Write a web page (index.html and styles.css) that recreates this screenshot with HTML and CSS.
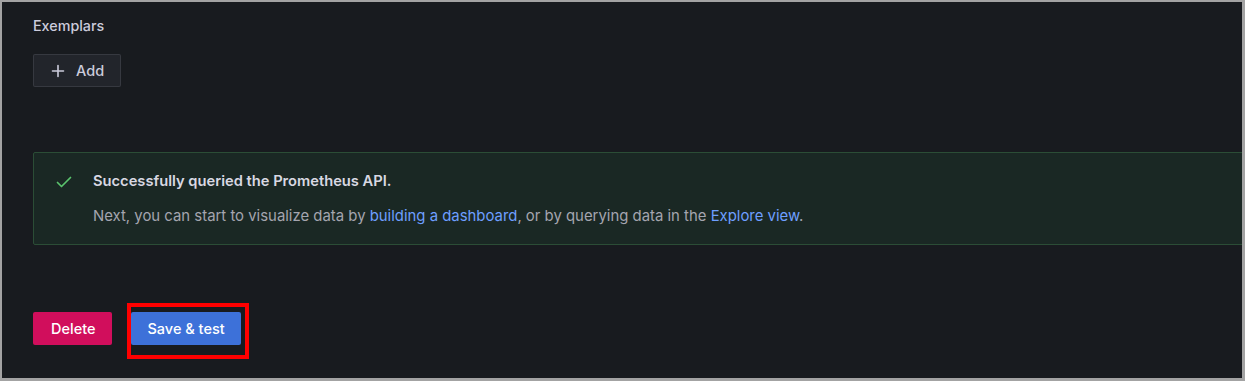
FILE: index.html
```html
<!DOCTYPE html>
<html>

<head>
    <meta charset="utf-8">
    <title>Data source settings</title>
    <meta name="viewport" content="width=device-width, initial-scale=1">
    <link rel="stylesheet" href="styles.css">
</head>

<body>
    <div class="frame">
        <div class="content">
            <div class="field-label">Exemplars</div>
            <button class="btn btn-secondary">
                <svg class="btn-icon" width="16" height="16" viewBox="0 0 16 16">
                    <path d="M8 2.5v11M2.5 8h11" stroke="currentColor" stroke-width="1.6" fill="none" stroke-linecap="round"/>
                </svg>
                Add
            </button>

            <div class="alert alert-success">
                <svg class="alert-icon" width="16" height="16" viewBox="0 0 16 16">
                    <path d="M1.5 8.5l4 4 9-9" stroke="currentColor" stroke-width="1.7" fill="none" stroke-linecap="round" stroke-linejoin="round"/>
                </svg>
                <div class="alert-body">
                    <div class="alert-title">Successfully queried the Prometheus API.</div>
                    <div class="alert-text">Next, you can start to visualize data by <a href="#">building a dashboard</a>, or by querying data in the <a href="#">Explore view</a>.</div>
                </div>
            </div>

            <div class="actions">
                <button class="btn btn-danger">Delete</button>
                <span class="highlight">
                    <button class="btn btn-primary">Save &amp; test</button>
                </span>
            </div>
        </div>
    </div>
</body>

</html>
```

FILE: styles.css
```css
body {
    margin: 0;
    padding: 0;
    background-color: #a3a3a3;
    font-family: Inter, "Noto Sans", sans-serif;
    font-size: 14px;
}

.frame {
    box-sizing: border-box;
    width: 1245px;
    height: 381px;
    border-style: solid;
    border-color: #a3a3a3;
    border-width: 2px 3px 3px 2px;
    background-color: #181b1f;
    overflow: hidden;
}

.content {
    display: flex;
    flex-direction: column;
    align-items: flex-start;
    padding: 14px 0 0 31px;
    color: #ccccdc;
}

.field-label {
    font-weight: 500;
    font-size: 14.3px;
    line-height: 20px;
    margin-bottom: 18px;
}

.btn {
    display: inline-flex;
    align-items: center;
    height: 33px;
    padding: 0 16px;
    border-radius: 2px;
    border: 1px solid transparent;
    font-family: inherit;
    font-size: 14.5px;
    font-weight: 500;
    color: #ffffff;
    cursor: pointer;
}

.btn-secondary {
    background-color: #22252b;
    border-color: rgba(204, 204, 220, 0.12);
    color: #ccccdc;
    padding-right: 16px;
}

.btn-icon {
    margin-right: 10px;
}

.btn-danger {
    background-color: #d10e5c;
    padding: 0 16px 0 17px;
}

.btn-primary {
    background-color: #3d71d9;
    padding: 0 15px;
}

.alert {
    display: flex;
    align-items: flex-start;
    box-sizing: border-box;
    width: calc(100% + 20px);
    margin-top: 65px;
    padding: 18px 20px 18px 22px;
    background-color: #1a2824;
    border: 1px solid #2b4d36;
    border-radius: 2px;
}

.alert-icon {
    color: #5ac36d;
    margin-top: 3px;
    margin-right: 21px;
}

.alert-title {
    font-weight: 600;
    font-size: 14.7px;
    line-height: 20px;
    color: #d8d8e2;
}

.alert-text {
    margin-top: 15px;
    font-size: 14.9px;
    line-height: 20px;
    color: #a4a5af;
}

.alert-text a {
    color: #6e9fff;
    text-decoration: none;
}

.actions {
    display: flex;
    align-items: center;
    gap: 19px;
    margin-top: 67px;
}

.highlight {
    position: relative;
    display: inline-flex;
}

.highlight::after {
    content: "";
    position: absolute;
    left: -4px;
    top: -9px;
    right: -8px;
    bottom: -14px;
    border: 4px solid #ff0000;
    pointer-events: none;
}
```
